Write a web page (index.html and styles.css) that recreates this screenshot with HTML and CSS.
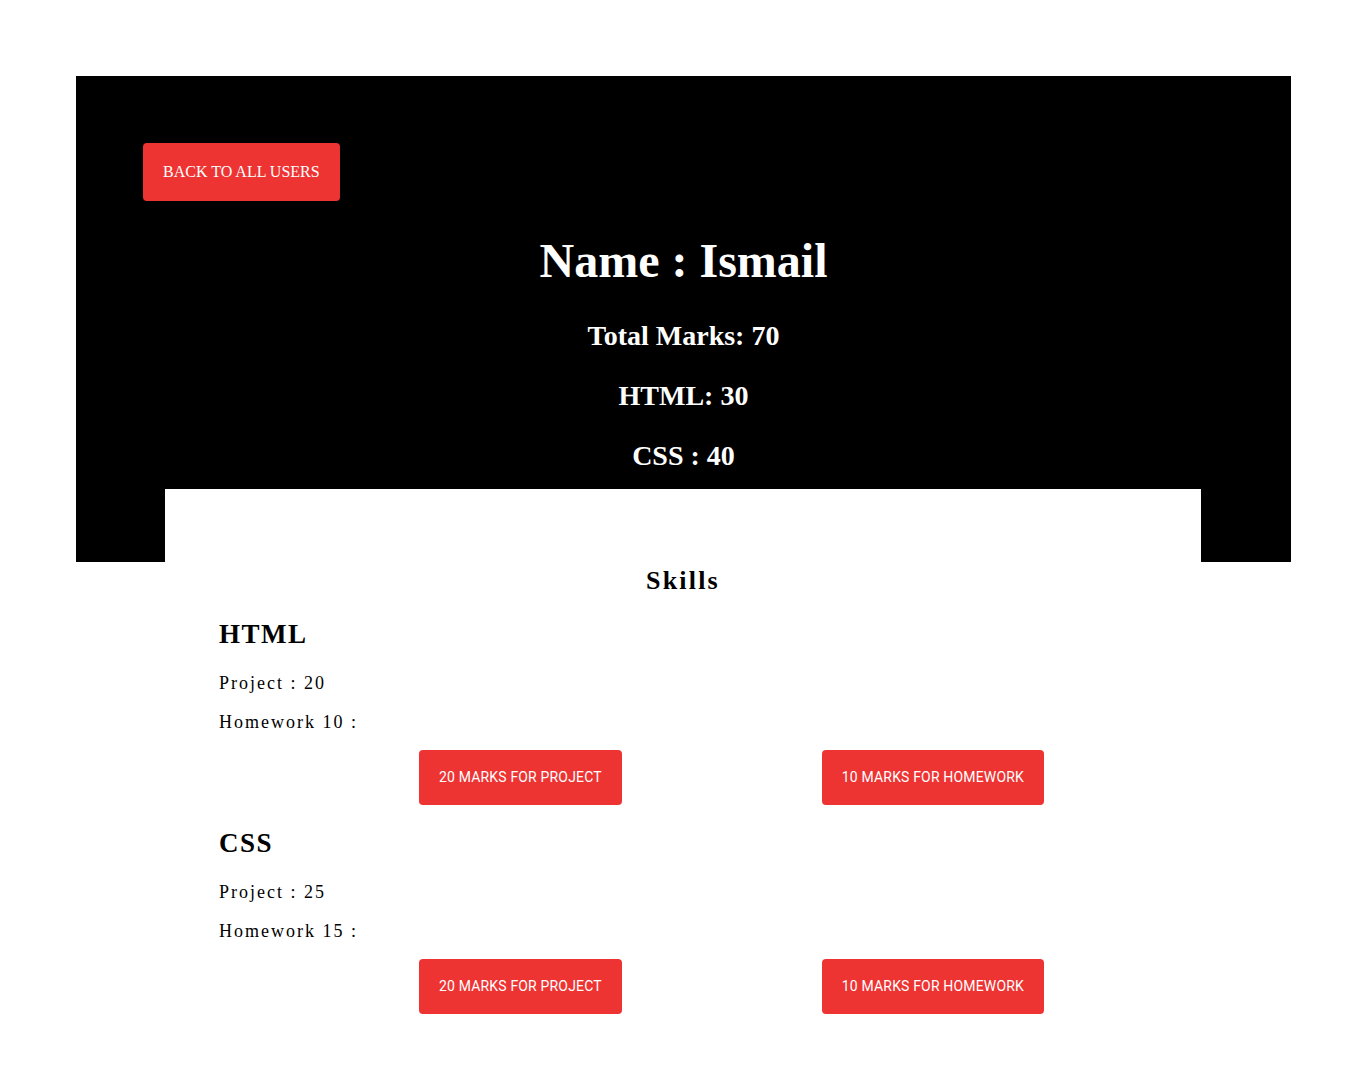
FILE: index.html
```html
<!DOCTYPE html>
<html lang="en">
<head>
<meta charset="utf-8">
<title>User</title>
<link rel="stylesheet" href="styles.css">
</head>
<body>
<section class="profile">
  <a class="back-btn" href="#">BACK TO ALL USERS</a>
  <h1 class="name">Name : Ismail</h1>
  <p class="mark">Total Marks: 70</p>
  <p class="mark">HTML: 30</p>
  <p class="mark">CSS : 40</p>
</section>
<section class="panel">
  <h2 class="panel-title">Skills</h2>
  <div class="skill">
    <h3 class="skill-name">HTML</h3>
    <p class="skill-line first">Project : 20</p>
    <p class="skill-line">Homework 10 :</p>
    <div class="actions">
      <button class="mark-btn">20 MARKS FOR PROJECT</button>
      <button class="mark-btn">10 MARKS FOR HOMEWORK</button>
    </div>
  </div>
  <div class="skill">
    <h3 class="skill-name">CSS</h3>
    <p class="skill-line first">Project : 25</p>
    <p class="skill-line">Homework 15 :</p>
    <div class="actions">
      <button class="mark-btn">20 MARKS FOR PROJECT</button>
      <button class="mark-btn">10 MARKS FOR HOMEWORK</button>
    </div>
  </div>
</section>
</body>
</html>
```

FILE: styles.css
```css
html, body {
  margin: 0;
  padding: 0;
  background: #ffffff;
}

body {
  font-family: "Liberation Serif", "Times New Roman", serif;
  color: #000;
  padding-top: 76px;
  padding-bottom: 60px;
}

.profile {
  box-sizing: border-box;
  width: 1215px;
  height: 486px;
  margin-left: 76px;
  background: #000;
  padding-top: 67px;
  display: flex;
  flex-direction: column;
  align-items: center;
  color: #fff;
}

.back-btn {
  align-self: flex-start;
  margin-left: 67px;
  background: #ee3333;
  color: #fff;
  text-decoration: none;
  font-family: "Liberation Serif", "Times New Roman", serif;
  font-size: 16px;
  line-height: 18px;
  padding: 20px 20px;
  border-radius: 4px;
}

.name {
  margin: 32px 0 31px;
  font-size: 48px;
  line-height: 56px;
  font-weight: bold;
}

.mark {
  margin: 0 0 28px;
  font-size: 28px;
  line-height: 32px;
  font-weight: bold;
}

.panel {
  position: relative;
  box-sizing: border-box;
  width: 1036px;
  margin: -73px 0 0 165px;
  background: #fff;
  padding: 77px 54px 40px;
}

.panel-title {
  margin: 0;
  text-align: center;
  font-size: 26px;
  line-height: 30px;
  letter-spacing: 2.2px;
  font-weight: bold;
}

.skill {
  margin-top: 23px;
}

.skill-name {
  margin: 0;
  font-size: 27px;
  line-height: 31px;
  letter-spacing: 1.5px;
  font-weight: bold;
}

.skill-line {
  margin: 18px 0 0;
  font-size: 18px;
  line-height: 21px;
  letter-spacing: 2px;
}

.skill-line.first {
  margin-top: 23px;
}

.actions {
  margin-top: 17px;
  display: flex;
  gap: 200px;
  padding-left: 200px;
}

.mark-btn {
  border: none;
  background: #ee3333;
  color: #fff;
  font-family: Roboto, "Liberation Sans", sans-serif;
  font-size: 14px;
  line-height: 17px;
  letter-spacing: 0.17px;
  padding: 19px 20px;
  border-radius: 4px;
  cursor: pointer;
}
```
